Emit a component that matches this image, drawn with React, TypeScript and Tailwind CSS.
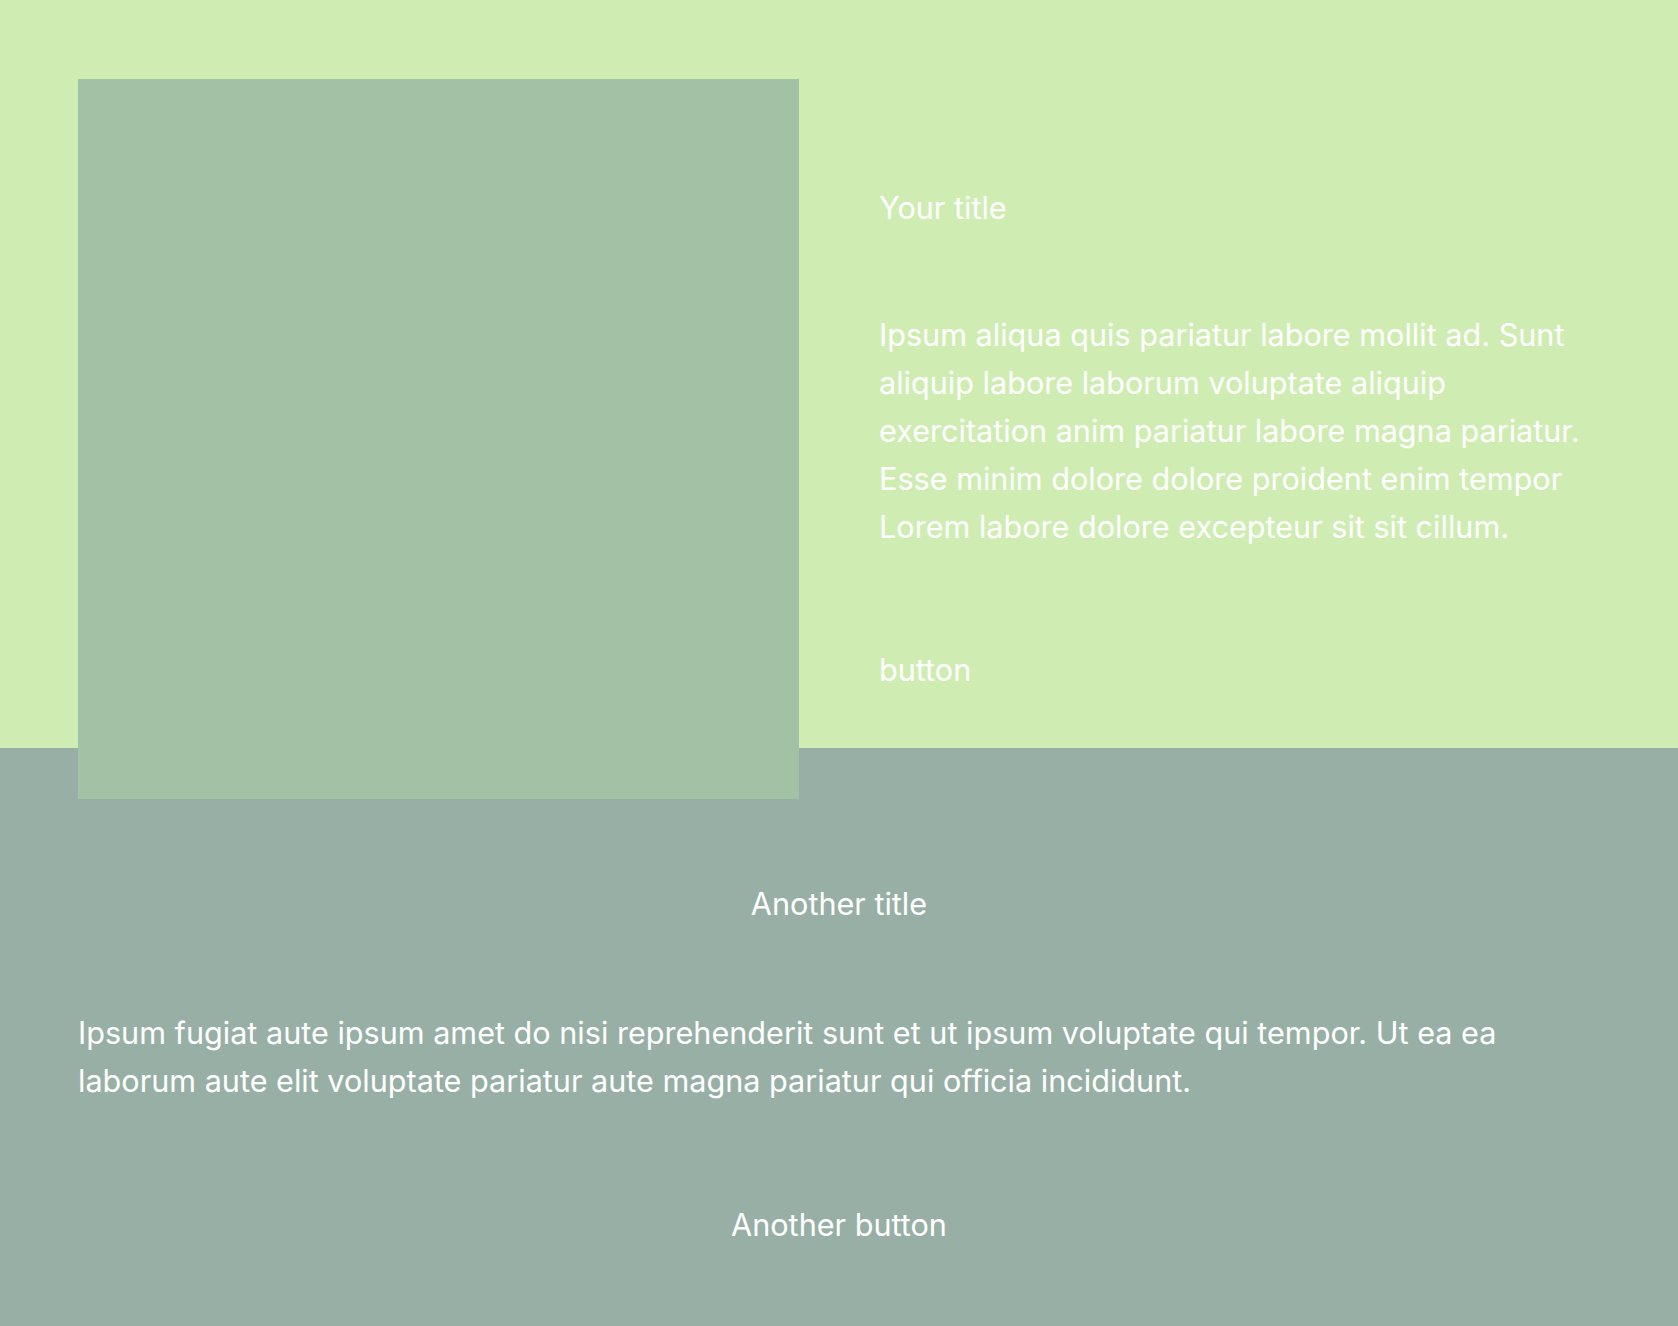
export default function App() {
  return (
    <div className="min-h-[1326px] bg-[#98afa6] text-white font-['Inter',sans-serif] text-[30.6px] leading-[48px]">
      <section className="flow-root bg-[#cfedb3] px-[78px] pt-[79px]">
        <div className="grid grid-cols-2 gap-[80px] h-[720px] -mb-[51px]">
          <div className="relative z-10 h-[720px] bg-[#a2c2a6]" />
          <div className="flex flex-col justify-center">
            <h2>Your title</h2>
            <p className="mt-[79px]">
              Ipsum aliqua quis pariatur labore mollit ad. Sunt aliquip labore laborum voluptate aliquip
              exercitation anim pariatur labore magna pariatur. Esse minim dolore dolore proident enim tempor
              Lorem labore dolore excepteur sit sit cillum.
            </p>
            <button className="mt-[95px] self-start">button</button>
          </div>
        </div>
      </section>
      <section className="bg-[#98afa6] px-[78px] pt-[132px] pb-[77px] flex flex-col">
        <h2 className="text-center">Another title</h2>
        <p className="mt-[81px]">
          Ipsum fugiat aute ipsum amet do nisi reprehenderit sunt et ut ipsum voluptate qui tempor. Ut ea ea
          laborum aute elit voluptate pariatur aute magna pariatur qui officia incididunt.
        </p>
        <button className="mt-[96px] self-center">Another button</button>
      </section>
    </div>
  );
}
